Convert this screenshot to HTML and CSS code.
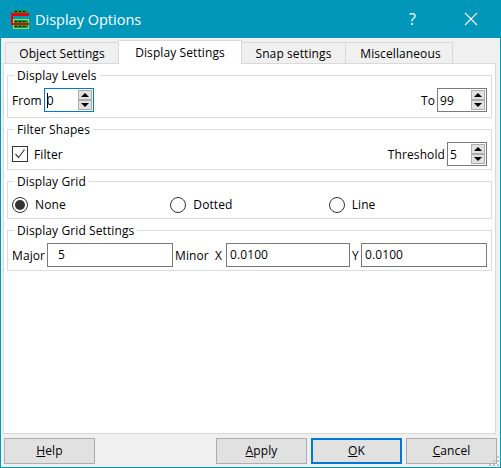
FILE: index.html
```html
<!DOCTYPE html>
<html lang="en">
<head>
  <meta charset="UTF-8">
  <title>Display Options</title>
  <link rel="stylesheet" href="styles.css">
</head>
<body>
  <div class="window">
    <div class="titlebar">
      <svg class="app-icon" width="20" height="20" viewBox="0 0 20 20">
        <rect x="4" y="0" width="13" height="3" fill="#0a9a2a"/>
        <rect x="3.500" y="9.500" width="15" height="9" fill="none" stroke="#9be04a"/>
        <rect x="4" y="10" width="14" height="3" fill="#0a9a2a"/>
        <rect x="4" y="15" width="14" height="3" fill="#0a9a2a"/>
        <path d="M5 1.500h2M9 1.500h2M13 1.500h2M5 11.500h2M9 11.500h2M13 11.500h2M5 16.500h2M9 16.500h2M13 16.500h2" stroke="#111" stroke-width="1"/>
        <path d="M1 3h18v3H3v7h16v2H1z" fill="#f00010"/>
      </svg>
      <span class="title">Display Options</span>
      <span class="help-btn">?</span>
      <svg class="close-btn" width="14" height="14" viewBox="0 0 14 14">
        <path d="M1 1l12 12M13 1L1 13" stroke="#fff" stroke-width="1.100" fill="none"/>
      </svg>
    </div>

    <div class="client">
      <div class="tabs">
        <div class="tab tab-object">Object Settings</div>
        <div class="tab tab-active">Display Settings</div>
        <div class="tab tab-snap">Snap settings</div>
        <div class="tab tab-misc">Miscellaneous</div>
      </div>

      <div class="pane">
        <fieldset class="group group-levels">
          <legend>Display Levels</legend>
          <span class="lbl">From</span>
          <div class="spin spin-from focused">
            <span class="value"><span class="caret"></span>0</span>
            <div class="arrows"><span class="up"></span><span class="down"></span></div>
          </div>
          <span class="grow"></span>
          <span class="lbl">To</span>
          <div class="spin spin-to">
            <span class="value">99</span>
            <div class="arrows"><span class="up"></span><span class="down"></span></div>
          </div>
        </fieldset>

        <fieldset class="group group-filter">
          <legend>Filter Shapes</legend>
          <span class="checkbox">
            <svg width="14" height="14" viewBox="0 0 14 14"><path d="M2.500 7l3 3.500 6-8" fill="none" stroke="#444" stroke-width="1.200"/></svg>
          </span>
          <span class="lbl check-lbl">Filter</span>
          <span class="grow"></span>
          <span class="lbl">Threshold</span>
          <div class="spin spin-threshold">
            <span class="value">5</span>
            <div class="arrows"><span class="up"></span><span class="down"></span></div>
          </div>
        </fieldset>

        <fieldset class="group group-grid">
          <legend>Display Grid</legend>
          <div class="radio-cell"><span class="radio on"></span><span class="lbl">None</span></div>
          <div class="radio-cell"><span class="radio"></span><span class="lbl">Dotted</span></div>
          <div class="radio-cell"><span class="radio"></span><span class="lbl">Line</span></div>
        </fieldset>

        <fieldset class="group group-settings">
          <legend>Display Grid Settings</legend>
          <span class="lbl lbl-major">Major</span>
          <div class="field field-major">5</div>
          <span class="lbl lbl-minor">Minor</span>
          <span class="lbl lbl-x">X</span>
          <div class="field field-x">0.0100</div>
          <span class="lbl lbl-y">Y</span>
          <div class="field field-y">0.0100</div>
        </fieldset>
      </div>

      <div class="buttons">
        <div class="btn"><u>H</u>elp</div>
        <span class="grow"></span>
        <div class="btn"><u>A</u>pply</div>
        <div class="btn btn-default"><u>O</u>K</div>
        <div class="btn"><u>C</u>ancel</div>
      </div>
      <svg class="grip" width="12" height="12" viewBox="0 0 12 12">
        <path d="M9 1h2v2H9zM5 5h2v2H5zM9 5h2v2H9zM1 9h2v2H1zM5 9h2v2H5zM9 9h2v2H9z" fill="#c4c4c4"/>
      </svg>
    </div>
  </div>
</body>
</html>
```

FILE: styles.css
```css
* {
  box-sizing: border-box;
}

html, body {
  margin: 0;
  padding: 0;
  height: 100%;
}

body {
  font-family: "Open Sans", "Noto Sans", sans-serif;
  font-size: 12px;
  letter-spacing: 0.1px;
  color: #000;
  overflow: hidden;
}

.window {
  width: 501px;
  height: 468px;
  border: 1px solid #0097bb;
  border-top: 0;
  display: flex;
  flex-direction: column;
  background: #f0f0f0;
}

.titlebar {
  height: 38px;
  background: #0097bb;
  color: #fff;
  display: flex;
  align-items: center;
  padding-left: 10px;
  margin: 0 -1px;
}

.app-icon {
  margin-right: 5px;
  margin-top: 1px;
}

.title {
  font-size: 14.500px;
  letter-spacing: 0;
  flex: 1;
}

.help-btn {
  font-size: 16px;
  margin-right: 48px;
}

.close-btn {
  margin-right: 23px;
}

.client {
  flex: 1;
  position: relative;
  display: flex;
  flex-direction: column;
  padding: 2px 4px 3px 2px;
}

.tabs {
  display: flex;
  height: 23px;
  padding-left: 2px;
  align-items: flex-end;
}

.tab {
  height: 21px;
  background: #f0f0f0;
  border: 1px solid #d9d9d9;
  border-bottom: 0;
  border-left: 0;
  text-align: center;
  line-height: 22px;
}

.tab-object {
  width: 114px;
  border-left: 1px solid #d9d9d9;
}

.tab-active {
  width: 123px;
  height: 24px;
  background: #fff;
  margin-bottom: -1px;
  position: relative;
  z-index: 1;
  line-height: 24px;
}

.tab-snap {
  width: 104px;
}

.tab-misc {
  width: 107px;
  padding-left: 3px;
}

.pane {
  flex: 1;
  background: #fff;
  border: 1px solid #d9d9d9;
  padding: 3px 3px 0 3px;
  display: flex;
  flex-direction: column;
}

.group {
  margin: 0 0 3px;
  padding: 4px 4px 3px 4px;
  border: 1px solid #dcdcdc;
  display: flex;
  align-items: center;
  min-width: 0;
}

.group legend {
  padding: 0 3px;
  margin-left: 2px;
  line-height: 18px;
  height: 17px;
}

.group-levels {
  padding-bottom: 5px;
}

.group-grid {
  padding-top: 6px;
  padding-bottom: 5px;
}

.grow {
  flex: 1;
}

.lbl {
  white-space: nowrap;
}

.spin {
  height: 24px;
  border: 1px solid #7a7a7a;
  background: #fff;
  display: flex;
  align-items: center;
  justify-content: space-between;
  margin-left: 2px;
  padding: 0 1px 0 2px;
}

.spin.focused {
  border-color: #0078d7;
}

.spin-from,
.spin-to {
  width: 50px;
}

.spin-threshold {
  width: 40px;
}

.caret {
  display: inline-block;
  width: 1px;
  height: 15px;
  margin-right: -1px;
  background: #000;
  vertical-align: -3px;
}

.arrows {
  width: 14px;
  height: 20px;
  display: flex;
  flex-direction: column;
}

.arrows span {
  flex: 1;
  background: #e1e1e1;
  border: 1px solid #adadad;
  position: relative;
}

.arrows span::after {
  content: "";
  position: absolute;
  left: 2px;
  border-left: 4px solid transparent;
  border-right: 4px solid transparent;
}

.up::after {
  top: 2px;
  border-bottom: 4px solid #000;
}

.down::after {
  top: 2px;
  border-top: 4px solid #000;
}

.checkbox {
  width: 16px;
  height: 16px;
  border: 1px solid #333;
  background: #fff;
  display: flex;
  align-items: center;
  justify-content: center;
}

.check-lbl {
  margin-left: 6px;
}

.radio-cell {
  width: 159px;
  display: flex;
  align-items: center;
}

.radio {
  width: 16px;
  height: 16px;
  border: 1px solid #333;
  border-radius: 50%;
  background: #fff;
  margin-right: 7px;
  position: relative;
}

.radio.on::after {
  content: "";
  position: absolute;
  left: 2px;
  top: 2px;
  width: 10px;
  height: 10px;
  border-radius: 50%;
  background: #333;
}

.field {
  height: 24px;
  border: 1px solid #7a7a7a;
  background: #fff;
  line-height: 22px;
  padding-left: 3px;
}

.lbl-major {
  width: 33px;
}

.field-major {
  width: 126px;
  margin-left: 2px;
  padding-left: 10px;
}

.lbl-minor {
  width: 32px;
  margin-left: 2px;
}

.lbl-x {
  width: 9px;
  margin-left: 8px;
}

.field-x {
  width: 124px;
  margin-left: 2px;
}

.lbl-y {
  width: 8px;
  margin-left: 2px;
}

.field-y {
  width: 126px;
  margin-left: 1px;
}

.buttons {
  display: flex;
  height: 26px;
  margin-top: 4px;
  margin-right: -1px;
  padding-left: 1px;
  gap: 4px;
}

.btn {
  width: 91px;
  height: 26px;
  background: #e1e1e1;
  border: 1px solid #adadad;
  text-align: center;
  line-height: 24px;
}

.btn-default {
  border: 2px solid #0078d7;
  line-height: 22px;
}

.grip {
  position: absolute;
  right: 0;
  bottom: 0;
}
```
